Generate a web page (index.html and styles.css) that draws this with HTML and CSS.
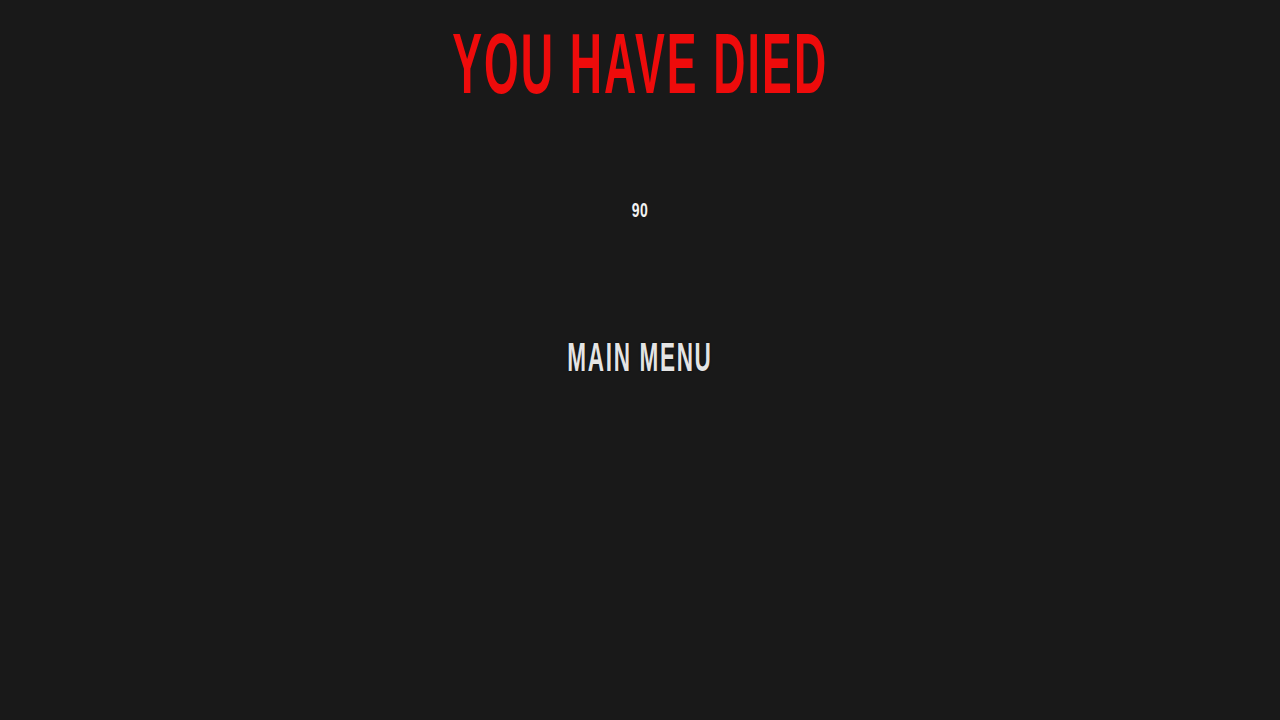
FILE: index.html
```html
<!DOCTYPE html>
<html lang="en">
  <head>
    <meta charset="UTF-8" />
    <meta name="viewport" content="width=device-width, initial-scale=1.0" />
    <title>Game Over</title>
    <link rel="stylesheet" href="styles.css">
  </head>
  <body>
    <div class="death-screen">
      <h1 class="title"><span>YOU HAVE DIED</span></h1>
      <div class="score"><span>90</span></div>
      <button class="menu-btn"><span>MAIN MENU</span></button>
    </div>
  </body>
</html>
```

FILE: styles.css
```css
* {
  margin: 0;
  padding: 0;
  box-sizing: border-box;
  font-family: "Liberation Sans", Arial, sans-serif;
}
body {
  background-color: #191919;
  width: 100vw;
  height: 100vh;
  overflow: hidden;
}

.death-screen {
  display: flex;
  flex-direction: column;
  align-items: center;
}

/* tall condensed caps: squeeze the bold face horizontally */
.title,
.score,
.menu-btn {
  font-weight: 700;
  line-height: 1;
  white-space: nowrap;
}
.title span,
.score span,
.menu-btn span {
  display: inline-block;
}

.title {
  color: #ee0b0b;
  font-size: 85px;
  margin-top: 21px;
}
.title span {
  letter-spacing: 4px;
  transform: scaleX(0.525);
}

.score {
  color: #f2f2f2;
  font-size: 20px;
  margin-top: 94px;
}
.score span {
  letter-spacing: 1px;
  transform: scaleX(0.7);
}

.menu-btn {
  background: none;
  border: none;
  color: #e4e4e4;
  font-size: 41px;
  margin-top: 117px;
  cursor: pointer;
  text-shadow: 0 0 2px #000;
}
.menu-btn span {
  letter-spacing: 3px;
  transform: scaleX(0.55);
}
```
